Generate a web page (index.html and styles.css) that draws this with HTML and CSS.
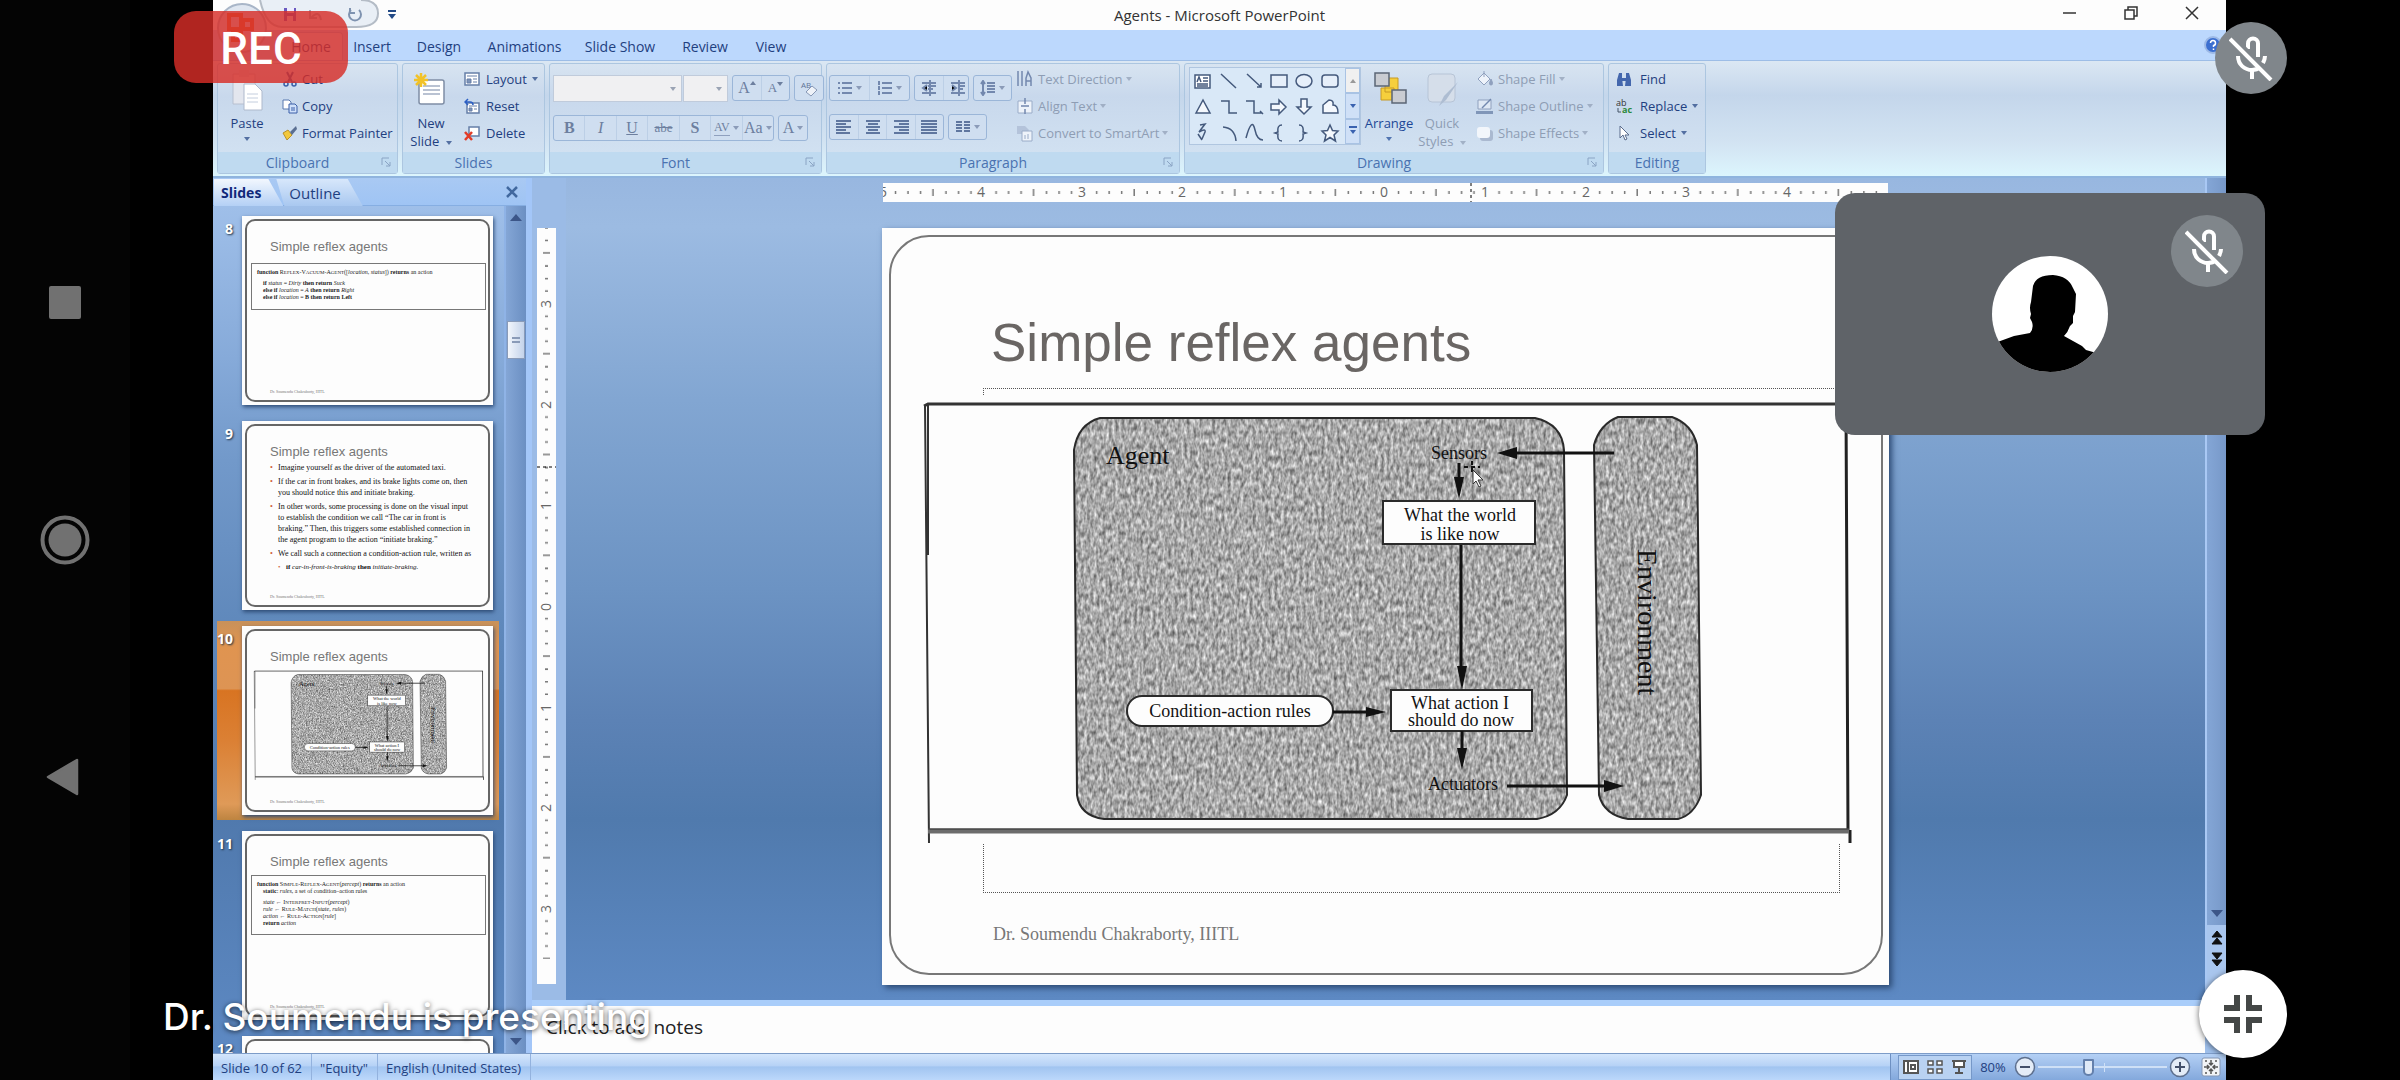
FILE: index.html
```html
<!DOCTYPE html>
<html lang="en">
<head>
<meta charset="utf-8">
<title>Dr. Soumendu is presenting</title>
<link rel="stylesheet" href="styles.css">
</head>
<body>
<svg class="defs" aria-hidden="true">
  <defs>
    <filter id="halftone" x="0" y="0" width="1" height="1" color-interpolation-filters="sRGB">
      <feTurbulence type="fractalNoise" baseFrequency=".32 .16" numOctaves="2" seed="4"/>
      <feColorMatrix values=".8 0 0 0 .26  .8 0 0 0 .26  .8 0 0 0 .26  0 0 0 0 1"/>
      <feComposite operator="in" in2="SourceGraphic"/>
    </filter>
    <symbol id="mic-off" viewBox="0 0 44 46">
      <g fill="none" stroke="#fff" stroke-width="4">
        <path d="M19 14V8.500a5 5 0 0 1 10 0V22"/>
        <path d="M9 21c0 9 7 14 14 14 3 0 6-1 8-3M36 21c0 3-1 5-2 7"/>
        <path d="M23 35v9"/>
      </g>
      <path d="M4 1l40 42" stroke="#80868b" stroke-width="4"/>
      <path d="M1 4l41 41" stroke="#fff" stroke-width="4"/>
    </symbol>
    <symbol id="launch" viewBox="0 0 10 10"><path d="M1 8V1h7M4 4l5 5M9 5v4H5" fill="none" stroke="#8aa4c4"/></symbol>
    <pattern id="hticks" width="100.6" height="20" patternUnits="userSpaceOnUse">
      <path d="M12.500 8v3M25 8v3M37.500 8v3M50 6v7M63 8v3M75.500 8v3M88 8v3" stroke="#777" stroke-width="1.500"/>
    </pattern>
    <pattern id="vticks" width="20" height="100.8" patternUnits="userSpaceOnUse">
      <path d="M8 12.500h3M8 25h3M8 37.500h3M6 50h7M8 63h3M8 75.500h3M8 88h3" stroke="#777" stroke-width="1.500"/>
    </pattern>
  </defs>
</svg>

<div class="screen">
  <nav class="sysnav" aria-label="System">
    <button aria-label="Recents"><svg width="34" height="34"><rect x="1" width="32" height="33" rx="2" fill="#717171"/></svg></button>
    <button aria-label="Home"><svg width="50" height="50"><circle cx="25" cy="25" r="22.500" fill="none" stroke="#717171" stroke-width="4"/><circle cx="25" cy="25" r="16.500" fill="#717171"/></svg></button>
    <button aria-label="Back"><svg width="38" height="40"><path d="M2 20L31 3v34z" fill="#717171" stroke="#717171" stroke-width="2.500" stroke-linejoin="round"/></svg></button>
  </nav>

  <main class="app">
    <header class="titlebar">
      <div class="quick">
        <svg width="170" height="60">
          <path d="M47 0q6 27 22 27h74q22 0 22-13.500T148 0" fill="#e9eff6" stroke="#b4bcc6" stroke-width="2"/>
          <circle cx="29" cy="28" r="24" fill="#dfe6f0" stroke="#a9b6c8" stroke-width="2"/>
          <path d="M16 15h12v14H16zM30 20h9v9h-9zM20 32h8v8h-8z" fill="none" stroke="#e2703a" stroke-width="4"/>
          <path d="M71 8h12v13H71z" fill="#6a5ac0"/><path d="M74 8h7v5h-7zM74 16h6v5h-6z" fill="#eef"/>
          <path d="M98 18q8-9 10 2M97 10v8h7" fill="none" stroke="#9ea9bd" stroke-width="2"/>
          <path d="M138 10a6 6 0 1 0 8 0M137 8v5h5" fill="none" stroke="#7f93b0" stroke-width="2"/>
        </svg>
        <svg class="more" width="10" height="12"><path d="M1 2h8" stroke="#234a86" stroke-width="2"/><path d="M1 5h8l-4 5z" fill="#234a86"/></svg>
      </div>
      <h1>Agents - Microsoft PowerPoint</h1>
      <div class="wincontrols">
        <button aria-label="Minimize"><svg width="14" height="14"><path d="M0 7h13" stroke="#333" stroke-width="1.500"/></svg></button>
        <button aria-label="Restore"><svg width="14" height="14" fill="none" stroke="#333" stroke-width="1.500"><path d="M1 4h9v9H1zM4 4V1h9v9h-3"/></svg></button>
        <button aria-label="Close"><svg width="14" height="14"><path d="M1 1l12 12M13 1L1 13" stroke="#333" stroke-width="1.500"/></svg></button>
      </div>
    </header>

    <div class="tabs">
      <button class="tab on">Home</button><button class="tab">Insert</button><button class="tab">Design</button><button class="tab">Animations</button><button class="tab">Slide Show</button><button class="tab">Review</button><button class="tab">View</button>
      <svg class="help" width="20" height="20"><circle cx="10" cy="10" r="8" fill="#3c6fd0" stroke="#9db9e6" stroke-width="2"/><path d="M7.500 8a2.500 2.500 0 1 1 3 2.500v1.500M10.500 13.500v1.500" stroke="#fff" stroke-width="1.500" fill="none"/></svg>
    </div>

    <div class="ribbon">
      <section class="group clipboard">
        <div class="body">
          <button class="big"><svg width="36" height="44"><path d="M4 6h22v30H4z" fill="#e3e6ee" stroke="#b7c0d0"/><path d="M10 2h10v7H10z" fill="#cfd5e0"/><path d="M15 16h11l7 7v19H15z" fill="#fff" stroke="#aeb9cc"/><path d="M18 26h11M18 30h11M18 34h11" stroke="#c4cede"/></svg><span>Paste</span><i class="car"></i></button>
          <div class="col">
            <button><svg width="16" height="16"><path d="M5 1l5 10M11 1L6 11" stroke="#3a5fa8" stroke-width="2"/><circle cx="4" cy="13" r="2" fill="none" stroke="#3a5fa8" stroke-width="1.500"/><circle cx="12" cy="13" r="2" fill="none" stroke="#3a5fa8" stroke-width="1.500"/></svg>Cut</button>
            <button><svg width="16" height="16"><path d="M1 2h6l2 2v7H1z" fill="#fff" stroke="#5878b0"/><path d="M7 6h6l2 2v7H7z" fill="#cfe0fa" stroke="#3a5fa8"/><path d="M9 10h4M9 12h4" stroke="#3a5fa8"/></svg>Copy</button>
            <button><svg width="16" height="16"><path d="M1 8l5-3 4 5-5 5z" fill="#f2c83c" stroke="#b8902a"/><path d="M8 7l6-6 1 3-5 6z" fill="#5a6f92"/></svg>Format Painter</button>
          </div>
        </div>
        <h2 class="more-opts">Clipboard<svg width="10" height="10"><use href="#launch"/></svg></h2>
      </section>

      <section class="group slides">
        <div class="body">
          <button class="big"><svg width="36" height="44"><rect x="6" y="12" width="25" height="24" rx="2" fill="#fff" stroke="#7f8da5" stroke-width="1.500"/><path d="M10 18h17M10 22h17M10 26h17" stroke="#b9c2d2" stroke-width="2"/><path d="M8 5v14M1 12h14M3 7l10 10M13 7L3 17" stroke="#f2c227" stroke-width="2.500"/></svg><span>New<br>Slide <i class="car"></i></span></button>
          <div class="col">
            <button><svg width="16" height="16"><path d="M1 2h14v12H1z" fill="#fff" stroke="#667fa8" stroke-width="1.500"/><path d="M3 5h10M3 8h4v4H3zM9 8h4M9 11h4" fill="#7e94b8" stroke="#667fa8"/></svg>Layout <i class="car"></i></button>
            <button><svg width="16" height="16"><path d="M3 5h12v10H3z" fill="#fff" stroke="#667fa8" stroke-width="1.500"/><path d="M5 8h8M5 10h3v3H5zM10 11h3" fill="#7e94b8" stroke="#667fa8"/><path d="M1 4h5q3 0 3 3M4 1L1 4l3 3" fill="none" stroke="#2c5fc4" stroke-width="1.500"/></svg>Reset</button>
            <button><svg width="16" height="16"><path d="M5 2h10v9H5z" fill="#fff" stroke="#667fa8" stroke-width="1.500"/><path d="M1 7l7 8M8 7l-7 8" stroke="#e23c28" stroke-width="2.500"/></svg>Delete</button>
          </div>
        </div>
        <h2>Slides</h2>
      </section>

      <section class="group font">
        <div class="body rows">
          <div class="row">
            <div class="combo"><select class="face" aria-label="Font" disabled></select><select class="size" aria-label="Font size" disabled></select></div>
            <div class="seg"><button class="serif" aria-label="Grow font">A<svg width="6" height="16"><path d="M0 5l3-4 3 4z" fill="#6d7f9f"/></svg></button><button class="serif small" aria-label="Shrink font">A<svg width="6" height="16"><path d="M0 2l3 4 3-4z" fill="#6d7f9f"/></svg></button></div>
            <div class="seg"><button aria-label="Clear formatting"><svg width="18" height="18"><text x="1" y="9" class="tiny">AB</text><path d="M6 13l6-6 5 4-6 6z" fill="#eef2f8" stroke="#8798b5"/></svg></button></div>
          </div>
          <div class="row">
            <div class="seg wide"><button class="serif"><b>B</b></button><button class="serif"><em>I</em></button><button class="serif"><u>U</u></button><button class="serif"><s>abe</s></button><button class="serif"><b>S</b></button><button class="serif av"><span>AV</span><i class="car"></i></button><button class="serif">Aa<i class="car"></i></button></div>
            <div class="seg"><button class="serif color">A<i class="car"></i></button></div>
          </div>
        </div>
        <h2 class="more-opts">Font<svg width="10" height="10"><use href="#launch"/></svg></h2>
      </section>

      <section class="group paragraph">
        <div class="body">
          <div class="rows">
            <div class="row">
              <div class="seg p2"><button aria-label="Bullets"><svg width="16" height="16" stroke="#7388ae" stroke-width="2"><path d="M1 3h2M1 8h2M1 13h2M5 3h10M5 8h10M5 13h10"/></svg><i class="car"></i></button><button aria-label="Numbering"><svg width="16" height="16" stroke="#7388ae" stroke-width="2"><path d="M2 1v4M2 6v4M2 11v4M5 3h10M5 8h10M5 13h10"/></svg><i class="car"></i></button></div>
              <div class="seg i2"><button aria-label="Decrease indent"><svg width="16" height="16" stroke="#7388ae" stroke-width="2"><path d="M1 3h14M7 6h8M7 9h5M1 13h14M6 5L2 8l4 3M9 0v16"/></svg></button><button aria-label="Increase indent"><svg width="16" height="16" stroke="#7388ae" stroke-width="2"><path d="M1 3h14M8 6h7M8 9h5M1 13h14M2 5l4 3-4 3M9 0v16"/></svg></button></div>
              <div class="seg s1"><button aria-label="Line spacing"><svg width="16" height="16" stroke="#7388ae" stroke-width="2" fill="none"><path d="M3 1v14M1 4l2-3 2 3M1 12l2 3 2-3M7 3h8M7 6h8M7 9h8M7 12h8"/></svg><i class="car"></i></button></div>
            </div>
            <div class="row">
              <div class="seg a4"><button aria-label="Align left"><svg width="16" height="16" stroke="#5f769f" stroke-width="2"><path d="M0 2h15M0 5h10M0 8h15M0 11h10M0 14h14"/></svg></button><button aria-label="Center"><svg width="16" height="16" stroke="#5f769f" stroke-width="2"><path d="M1 2h14M3 5h10M1 8h14M3 11h10M1 14h14"/></svg></button><button aria-label="Align right"><svg width="16" height="16" stroke="#5f769f" stroke-width="2"><path d="M1 2h15M6 5h10M1 8h15M6 11h10M1 14h15"/></svg></button><button aria-label="Justify"><svg width="16" height="16" stroke="#5f769f" stroke-width="2"><path d="M0 2h16M0 5h16M0 8h16M0 11h16M0 14h16"/></svg></button></div>
              <div class="seg s1"><button aria-label="Columns"><svg width="16" height="16" stroke="#5f769f" stroke-width="2"><path d="M1 3h6M1 6h6M1 9h6M1 12h6M9 3h6M9 6h6M9 9h6M9 12h6"/></svg><i class="car"></i></button></div>
            </div>
          </div>
          <div class="col off">
            <button><svg width="18" height="18" stroke="#7388ae" stroke-width="1.500" fill="none"><path d="M2 1v15M6 1v15M10 16V8l2-6 3 6v8M10 11h5"/></svg>Text Direction <i class="car"></i></button>
            <button><svg width="18" height="18"><path d="M2 4h14v12H2z" fill="#eef3fa" stroke="#9aacc8"/><path d="M9 1v6M9 17v-5M5 9h8" stroke="#7388ae" stroke-width="1.500"/></svg>Align Text <i class="car"></i></button>
            <button><svg width="18" height="18"><path d="M1 2h8l4 4-3 4H1z" fill="#b4c3da"/><path d="M6 7h10v10H6z" fill="#eef3fa" stroke="#9aacc8"/><path d="M9 11v4M12 10v5" stroke="#9aacc8"/></svg>Convert to SmartArt <i class="car"></i></button>
          </div>
        </div>
        <h2 class="more-opts">Paragraph<svg width="10" height="10"><use href="#launch"/></svg></h2>
      </section>

      <section class="group drawing">
        <div class="body">
          <div class="gallery">
            <svg width="155" height="78" fill="none" stroke="#44597c" stroke-width="1.500">
              <g><path d="M5 7h15v13H5z" fill="#fff"/><path d="M7 16h11M7 18h11M13 10h5M13 13h5"/><path d="M7 14l2-5 2 5" /></g>
              <path d="M31 6l15 14M57 6l14 13M71 15v4h-4"/>
              <path d="M81 7h16v12H81z" fill="#e6effa"/><ellipse cx="114" cy="13" rx="8" ry="6.500" fill="#e6effa"/><rect x="132" y="7" width="16" height="12" rx="3" fill="#e6effa"/>
              <path d="M6 45l7-13 7 13z" fill="#f4f8fd"/><path d="M31 33h8v12h8M56 33h8v12h8M70 43l3 3"/>
              <path d="M81 36h8v-4l7 7-7 7v-4h-8zM111 31h6v8h4l-7 7-7-7h4z" fill="#f4f8fd"/><path d="M133 45v-8l6-5q5 0 4 5 5 0 5 8z" fill="#f4f8fd"/>
              <path d="M10 57l5-1-6 8q7-4 6 0l-3 7M8 66l4 6M33 59q12 1 13 14M56 70q6-22 9-8 2 10 8 10M92 57q-5 0-4 7l-3 1 3 1q-1 7 4 7M109 57q5 0 4 7l3 1-3 1q1 7-4 7"/>
              <path d="M140 57l2.500 5.500 5.500.5-4 4 1.500 6-5.500-3.500-5.500 3.500 1.500-6-4-4 5.500-.5z" fill="#f4f8fd"/>
            </svg>
            <div class="gscroll"><button aria-label="Previous shapes" class="dis"><svg width="8" height="8"><path d="M1 6l3-4 3 4z" fill="#999"/></svg></button><button aria-label="Next shapes"><svg width="8" height="8"><path d="M1 2l3 4 3-4z" fill="#3a62b0"/></svg></button><button aria-label="More shapes"><svg width="8" height="10"><path d="M0 0h8v2H0zM1 4l3 4 3-4z" fill="#3a62b0"/></svg></button></div>
          </div>
          <button class="big strong"><svg width="36" height="44"><path d="M14 10h13v14H14zM10 20h13v12H10z" fill="#f6cf3c" stroke="#c79a24"/><path d="M4 5h14v13H4zM21 22h14v13H21z" fill="#c9ccd2" stroke="#5b6676" stroke-width="1.500"/></svg><span>Arrange</span><i class="car"></i></button>
          <button class="big off"><svg width="36" height="44"><rect x="4" y="6" width="27" height="28" rx="4" fill="#d5deea" stroke="#b7c4d6"/><path d="M34 14L22 32l-7 6 5-10z" fill="#aebdd2"/></svg><span>Quick<br>Styles <i class="car"></i></span></button>
          <div class="col off">
            <button><svg width="18" height="18"><path d="M2 9l6-6 6 6-6 6z" fill="#eef3fa" stroke="#8fa0be"/><path d="M8 1v6M15 9q3 6 0 6t0-6" stroke="#8fa0be" fill="#8fa0be"/></svg>Shape Fill <i class="car"></i></button>
            <button><svg width="18" height="18"><path d="M2 3h13v9H2z" fill="#dfe8f4" stroke="#8fa0be"/><path d="M6 11l9-9" stroke="#7388ae" stroke-width="1.500"/><path d="M0 15.500h17" stroke="#8096b8" stroke-width="3"/></svg>Shape Outline <i class="car"></i></button>
            <button><svg width="18" height="18"><rect x="4" y="6" width="13" height="11" rx="3" fill="#aab9d0"/><rect x="1" y="3" width="13" height="11" rx="3" fill="#f2f6fb"/></svg>Shape Effects <i class="car"></i></button>
          </div>
        </div>
        <h2 class="more-opts">Drawing<svg width="10" height="10"><use href="#launch"/></svg></h2>
      </section>

      <section class="group editing">
        <div class="body">
          <div class="col">
            <button><svg width="18" height="16"><path d="M3 2h3v5l1 8H1V9zM10 2h3l2 7v6H9l1-8z" fill="#4467ad"/><path d="M6 7h4v3H6z" fill="#4467ad"/></svg>Find</button>
            <button><svg width="18" height="20"><text x="0" y="10" class="tiny dark">ab</text><text x="6" y="17" class="tiny green">ac</text><path d="M2 12v4h3" fill="none" stroke="#456"/></svg>Replace <i class="car"></i></button>
            <button><svg width="18" height="16"><path d="M4 1v12l3-3 2 5 2-1-2-4h4z" fill="#fff" stroke="#5a6c8c"/></svg>Select <i class="car"></i></button>
          </div>
        </div>
        <h2>Editing</h2>
      </section>
    </div>

    <div class="work">
      <aside class="pane">
        <div class="panetabs">
          <button class="ptab on">Slides</button><button class="ptab">Outline</button><button class="close" aria-label="Close pane"><svg width="12" height="12"><path d="M1 1l10 10M11 1L1 11" stroke="#41689f" stroke-width="2.500"/></svg></button>
        </div>
        <div class="panebody">
          <ol class="thumbs">
            <li><span class="num">8</span><div class="thumb">
              <h3>Simple reflex agents</h3>
              <div class="code eight"><p><b>function</b> R<small>EFLEX</small>-V<small>ACUUM</small>-A<small>GENT</small>([<em>location, status</em>]) <b>returns</b> an action</p>
              <p class="in gap"><b>if</b> <em>status</em> = <em>Dirty</em> <b>then return</b> <em>Suck</em></p><p class="in"><b>else if</b> <em>location</em> = <em>A</em> <b>then return</b> <em>Right</em></p><p class="in"><b>else if</b> <em>location</em> = <b>B then return Left</b></p></div>
              <footer>Dr. Soumendu Chakraborty, IIITL</footer></div></li>
            <li><span class="num">9</span><div class="thumb">
              <h3>Simple reflex agents</h3>
              <ul><li>Imagine yourself as the driver of the automated taxi.</li><li>If the car in front brakes, and its brake lights come on, then<br>you should notice this and initiate braking.</li><li>In other words, some processing is done on the visual input<br>to establish the condition we call “The car in front is<br>braking.” Then, this triggers some established connection in<br>the agent program to the action “initiate braking.”</li><li>We call such a connection a condition-action rule, written as</li><li class="sub"><b>if</b> <em>car-in-front-is-braking</em> <b>then</b> <em>initiate-braking.</em></li></ul>
              <footer>Dr. Soumendu Chakraborty, IIITL</footer></div></li>
            <li class="sel"><span class="num">10</span><div class="thumb">
              <h3>Simple reflex agents</h3>
              <svg class="mini" viewBox="920 396 936 447" width="232" height="111"><use href="#diagram"/></svg>
              <footer>Dr. Soumendu Chakraborty, IIITL</footer></div></li>
            <li><span class="num">11</span><div class="thumb">
              <h3>Simple reflex agents</h3>
              <div class="code eleven"><p><b>function</b> S<small>IMPLE</small>-R<small>EFLEX</small>-A<small>GENT</small>(<em>percept</em>) <b>returns</b> an action</p><p class="in"><b>static</b>: <em>rules</em>, a set of condition–action rules</p>
              <p class="in gap"><em>state</em> ← I<small>NTERPRET</small>-I<small>NPUT</small>(<em>percept</em>)</p><p class="in"><em>rule</em> ← R<small>ULE</small>-M<small>ATCH</small>(<em>state, rules</em>)</p><p class="in"><em>action</em> ← R<small>ULE</small>-A<small>CTION</small>[<em>rule</em>]</p><p class="in"><b>return</b> <em>action</em></p></div>
              <footer>Dr. Soumendu Chakraborty, IIITL</footer></div></li>
            <li><span class="num">12</span><div class="thumb"></div></li>
          </ol>
          <div class="vscroll"><i class="up"></i><i class="grip"></i><i class="down"></i></div>
        </div>
      </aside>

      <section class="editor">
        <div class="canvas">
          <div class="vruler">
            <svg width="19" height="756">
              <rect width="19" height="756" fill="#fdfdfd"/><rect y="-24" width="19" height="780" fill="url(#vticks)" transform="translate(0 -25)"/>
              <g class="rnum"><text transform="translate(14 76) rotate(-90)">3</text><text transform="translate(14 177) rotate(-90)">2</text><text transform="translate(14 278) rotate(-90)">1</text><text transform="translate(14 379) rotate(-90)">0</text><text transform="translate(14 480) rotate(-90)">1</text><text transform="translate(14 580) rotate(-90)">2</text><text transform="translate(14 681) rotate(-90)">3</text></g>
              <path d="M0 239h19" stroke="#000" stroke-width="1" stroke-dasharray="3 3"/>
            </svg>
          </div>
          <div class="stage">
            <svg class="hruler" width="1005" height="19">
              <rect width="1005" height="19" fill="#fdfdfd"/><rect width="1006" height="19" fill="url(#hticks)"/>
              <g class="rnum"><text x="0" y="14">5</text><text x="98" y="14">4</text><text x="199" y="14">3</text><text x="299" y="14">2</text><text x="400" y="14">1</text><text x="501" y="14">0</text><text x="602" y="14">1</text><text x="703" y="14">2</text><text x="803" y="14">3</text><text x="904" y="14">4</text></g>
              <path d="M588 0v19" stroke="#000" stroke-width="1" stroke-dasharray="3 3"/>
            </svg>
            <article class="slide">
              <div class="holder"></div>
              <h2>Simple reflex agents</h2>
              <svg class="figure" viewBox="920 396 936 447" width="936" height="447" role="img" aria-label="Simple reflex agent diagram">
                <g id="diagram">
                  <rect x="920" y="396" width="936" height="447" fill="#fdfdfd"/>
                  <path d="M924 406L928 404H1848" fill="none" stroke="#333" stroke-width="3"/>
                  <path d="M925 405l4 438M928 405v150" fill="none" stroke="#333" stroke-width="2"/>
                  <path d="M1846 404l2 428M1850 830v13" fill="none" stroke="#222" stroke-width="3"/>
                  <path d="M928 831h921" stroke="#6c6c6c" stroke-width="5"/><path d="M928 829h921" stroke="#333" stroke-width="1"/>
                  <path d="M1100 418H1535Q1562 424 1564 450L1567 795Q1560 815 1537 819H1104Q1080 816 1077 795L1074 450Q1078 424 1100 418z" fill="#aaa" filter="url(#halftone)"/>
                  <path d="M1618 417H1672Q1692 424 1697 445L1701 795Q1694 815 1678 819H1628Q1604 815 1599 795L1594 445Q1600 424 1618 417z" fill="#aaa" filter="url(#halftone)"/>
                  <g fill="none" stroke="#2a2a2a" stroke-width="2">
                    <path d="M1100 418H1535Q1562 424 1564 450L1567 795Q1560 815 1537 819H1104Q1080 816 1077 795L1074 450Q1078 424 1100 418z"/>
                    <path d="M1618 417H1672Q1692 424 1697 445L1701 795Q1694 815 1678 819H1628Q1604 815 1599 795L1594 445Q1600 424 1618 417z"/>
                    <rect x="1383" y="501" width="152" height="43" fill="#fdfdfd"/><rect x="1391" y="690" width="141" height="41" fill="#fdfdfd"/>
                    <rect x="1127" y="696" width="206" height="30" rx="15" fill="#fdfdfd"/>
                  </g>
                  <path d="M1614 453H1510M1459 463v22M1461 545v128M1462 731v24M1333 712h36M1507 786h98" stroke="#111" stroke-width="3"/>
                  <path d="M1497 453l20-6v12zM1459 499l-5-22h10zM1462 690l-5-24h10zM1462 770l-5-22h10zM1386 712l-20-5v10zM1624 786l-20-6v12z" fill="#111"/>
                  <g class="dtext">
                    <text x="1106" y="464" class="dbig">Agent</text>
                    <text x="1459" y="459" text-anchor="middle">Sensors</text>
                    <text x="1460" y="521" text-anchor="middle">What the world</text><text x="1460" y="540" text-anchor="middle">is like now</text>
                    <text x="1460" y="709" text-anchor="middle">What action I</text><text x="1461" y="726" text-anchor="middle">should do now</text>
                    <text x="1230" y="717" text-anchor="middle">Condition-action rules</text>
                    <text x="1463" y="790" text-anchor="middle">Actuators</text>
                    <text transform="translate(1638 549) rotate(90)" class="dside">Environment</text>
                  </g>
                </g>
                <path d="M1472 461v13M1464 467h16" stroke="#111" stroke-width="2" stroke-dasharray="4 3"/>
                <path d="M1473 470v14l3-3 3 6 2-1-3-6h5z" fill="#fff" stroke="#333"/>
              </svg>
              <footer>Dr. Soumendu Chakraborty, IIITL</footer>
            </article>
          </div>
          <div class="vscroll right"><div class="track"><i class="down"></i></div>
            <svg width="12" height="75"><path d="M6 6l5 6H1zM6 13l5 6H1zM6 41l5-6H1zM6 34l5-6H1z" fill="#111" stroke="#111"/></svg></div>
        </div>
        <div class="notes"><label class="sr" for="notes">Notes</label><input id="notes" type="text" value="Click to add notes"></div>
      </section>
    </div>

    <footer class="status">
      <span>Slide 10 of 62</span><span>"Equity"</span><span>English (United States)</span>
      <div class="right">
        <div class="views">
          <button aria-label="Normal"><svg width="16" height="16" fill="#fff" stroke="#555" stroke-width="2"><path d="M1 2h14v12H1zM5 2v12M8 6h4v4H8z"/></svg></button>
          <button aria-label="Slide sorter"><svg width="16" height="16" fill="#fff" stroke="#555" stroke-width="1.500"><path d="M1 2h5v4H1zM10 2h5v4h-5zM1 10h5v4H1zM10 10h5v4h-5z"/></svg></button>
          <button aria-label="Slide show"><svg width="16" height="16" fill="#fff" stroke="#555" stroke-width="2"><path d="M1 2h14M3 3v5h10V3M8 8v5M4 14h8"/></svg></button>
        </div>
        <button class="pct">80%</button>
        <button aria-label="Zoom out"><svg width="22" height="22"><circle cx="11" cy="11" r="9.500" fill="#e4ecf7" stroke="#5d6f8d" stroke-width="1.500"/><path d="M6 11h10" stroke="#44506a" stroke-width="2"/></svg></button>
        <div class="slider"><input type="range" min="10" max="400" value="160" aria-label="Zoom"></div>
        <button aria-label="Zoom in"><svg width="22" height="22"><circle cx="11" cy="11" r="9.500" fill="#e4ecf7" stroke="#5d6f8d" stroke-width="1.500"/><path d="M6 11h10M11 6v10" stroke="#44506a" stroke-width="2"/></svg></button>
        <button class="fit" aria-label="Fit to window"><svg width="20" height="20"><rect x="1" y="1" width="18" height="18" rx="2" fill="#f2f4f7" stroke="#8497b5"/><path d="M10 3v5M8 6l2 2 2-2M10 17v-5M8 14l2-2 2 2M3 10h5M6 8l2 2-2 2M17 10h-5M14 8l-2 2 2 2M4 4h2M14 4h2M4 16h2M14 16h2" fill="none" stroke="#555" stroke-width="1.500"/></svg></button>
      </div>
    </footer>
  </main>

  <div class="rec">REC</div>
  <button class="mute top" aria-label="Microphone off"><svg width="44" height="46"><use href="#mic-off"/></svg></button>
  <div class="tile">
    <svg class="avatar" width="116" height="116" viewBox="0 0 116 116"><defs><clipPath id="disc"><circle cx="58" cy="58" r="58"/></clipPath></defs><g clip-path="url(#disc)"><rect width="116" height="116" fill="#fff"/><path d="M0 88L22 80 38 77Q42 72 40 66L38 62 39 58Q37 52 39 46L41 30Q44 19 61 19 76 20 81 32L84 38 83 56 81 60 81 67 78 70Q76 76 72 80L90 90 94 94 101 96 116 100V116H0z"/></g></svg>
    <div class="mute"><svg width="44" height="46"><use href="#mic-off"/></svg></div>
  </div>
  <p class="presenting">Dr. Soumendu is presenting</p>
  <button class="fab" aria-label="Exit full screen"><svg width="40" height="40"><path d="M14 1v13H1M26 1v13h13M14 39V26H1M26 39V26h13" fill="none" stroke="#444746" stroke-width="6"/></svg></button>
</div>
</body>
</html>
```
FILE: styles.css
```css
* { box-sizing: border-box; margin: 0; padding: 0; }
body { background: #000; font-family: "Open Sans", "Noto Sans", sans-serif; font-size: 13px; color: #1f4080; overflow: hidden; }
button, select, input { font: inherit; color: inherit; background: none; border: 0; }
svg { display: block; flex: none; }
.defs { position: absolute; width: 0; height: 0; }
.sr { position: absolute; clip-path: inset(50%); width: 1px; height: 1px; overflow: hidden; }

.screen { position: relative; display: flex; height: 100vh; padding-right: 174px; overflow: hidden; }
.sysnav { width: 130px; margin-right: 83px; background: #040404; display: flex; flex-direction: column; align-items: center; justify-content: center; gap: 187px; flex: none; }
.sysnav button { display: flex; align-items: center; justify-content: center; height: 50px; }

.app { flex: 1; min-width: 0; display: flex; flex-direction: column; background: #fdfdfd; }
.titlebar { position: relative; height: 30px; display: flex; align-items: center; justify-content: center; flex: none; }
.titlebar h1 { font-size: 15px; font-weight: 400; color: #333; line-height: 30px; }
.quick { position: absolute; left: 0; top: 0; z-index: 1; display: flex; gap: 4px; }
.more { margin-top: 9px; }
.wincontrols { position: absolute; right: 27px; top: 6px; display: flex; gap: 47px; }

.tabs { height: 31px; background: #bcd8fd; display: flex; align-items: flex-end; padding-left: 66px; border-bottom: 1px solid #9dbde6; flex: none; }
.tab { height: 28px; width: 64px; font-size: 14px; flex: none; }
.tab.on { background: #dbe8f6; border: 1px solid #9dbde6; border-bottom: 0; border-radius: 4px 4px 0 0; }
.tab:nth-child(2) { width: 58px; }
.tab:nth-child(3) { width: 76px; }
.tab:nth-child(4) { width: 95px; }
.tab:nth-child(5) { width: 96px; }
.tab:nth-child(6) { width: 74px; }
.tab:nth-child(7) { width: 58px; }
.help { margin: 0 3px 5px auto; }

.ribbon { display: flex; gap: 4px; height: 117px; padding: 2px 4px; background: linear-gradient(#dbe7f3, #c4d6eb 30%, #d2e3f2 70%, #dcf5fd); border-bottom: 2px solid #8fb4de; flex: none; }
.group { display: flex; flex-direction: column; border: 1px solid #acc6e0; border-radius: 3px; height: 111px; flex: none; background: linear-gradient(#d8e4f1, #c8d8ec 30%, #d4e4f3); }
.group h2 { position: relative; height: 21px; background: #bfdaf0; font-size: 14px; line-height: 22px; font-weight: 400; color: #4a72b0; text-align: center; }
.group h2.more-opts { padding-right: 20px; }
.group h2 svg { position: absolute; right: 6px; top: 5px; }
.body { flex: 1; display: flex; }
.clipboard { width: 181px; }
.slides { width: 143px; }
.font { width: 273px; }
.paragraph { width: 354px; }
.drawing { width: 420px; }
.editing { width: 98px; }
.clipboard .body { padding-left: 4px; }
.slides .body { padding-left: 3px; }
.drawing .body { padding-left: 4px; }
.editing .body { padding-left: 7px; }
.big { width: 50px; display: flex; flex-direction: column; align-items: center; justify-content: flex-start; line-height: 18px; flex: none; }
.big svg { margin-top: 4px; }
.big span { margin-top: 2px; }
.big > .car { margin: 5px 0 0; }
.car { display: inline-block; border: 3px solid transparent; border-top: 4px solid currentColor; border-bottom: 0; vertical-align: middle; margin-left: 3px; opacity: .7; }
.col { display: flex; flex-direction: column; padding: 1px 0 0 10px; }
.col button { display: flex; align-items: center; gap: 6px; height: 27px; white-space: nowrap; }
.clipboard .col button { gap: 4px; }
.off { color: #8e9db4; }
.strong { color: #1c4796; }
.col .car { margin-left: -1px; }
.slides .col { padding-left: 8px; }
.drawing .col { padding-left: 9px; }
.drawing .col button { gap: 4px; }
.editing .col { padding-left: 0; }

.rows { display: flex; flex-direction: column; gap: 13px; padding: 11px 0 0 3px; }
.row { display: flex; gap: 4px; }
.seg { display: flex; border: 1px solid #9bb6d8; border-radius: 3px; height: 26px; background: #cfdef0; color: #6d7f9f; }
.seg button { flex: 1; display: flex; align-items: center; justify-content: center; border-left: 1px solid #bccfe6; min-width: 28px; white-space: nowrap; }
.seg button:first-child { border-left: 0; }
.serif { font-family: "Liberation Serif", serif; font-size: 16px; }
.serif s { font-size: 13px; }
.small { font-size: 13px; }
.wide { width: 221px; }
.color { min-width: 40px; }
.av span { font-size: 12px; border-bottom: 1px solid #8fa0be; }
.tiny { font: 8px "Open Sans", sans-serif; fill: #5f7397; }
.tiny.dark { fill: #333; font-size: 9px; }
.tiny.green { fill: #2c8a3c; font-size: 9px; font-weight: 700; }
.combo { display: flex; gap: 1px; }
.combo select { appearance: none; height: 27px; border: 1px solid #c0cbdb; opacity: 1; background: #f0f0f2 url("data:image/svg+xml,%3Csvg xmlns='http://www.w3.org/2000/svg' width='6' height='4'%3E%3Cpath d='M0 0h6L3 4z' fill='%239aa3b4'/%3E%3C/svg%3E") right 5px center no-repeat; }
.face { width: 129px; }
.size { width: 45px; }
.p2 { width: 81px; }
.i2 { width: 55px; }
.s1 { width: 39px; }
.a4 { width: 115px; }
.paragraph .col { padding-left: 4px; }
.paragraph .col button { gap: 4px; }
.paragraph .rows { padding-left: 2px; }

.gallery { display: flex; width: 172px; height: 78px; margin-top: 3px; background: #d9e8f7; border: 1px solid #b0c6e0; }
.gallery > svg { height: 76px; }
.gscroll { flex: 1; display: flex; flex-direction: column; }
.gscroll button { flex: 1; display: flex; align-items: center; justify-content: center; border: 1px solid #a9c3e4; background: #cfe0f7; }
.gscroll .dis { background: #f0f0f0; }
.drawing .big { width: 56px; }
.drawing .off.big { width: 50px; }

.work { flex: 1; min-height: 0; display: flex; }
.pane { width: 313px; flex: none; display: flex; flex-direction: column; }
.panetabs { height: 28px; padding: 1px 0 0 1px; display: flex; background: linear-gradient(#a9c9f3, #9fc4f4); border-bottom: 1px solid #86aee2; flex: none; }
.ptab { height: 27px; font-size: 15px; padding: 0 22px 0 7px; background: linear-gradient(#d7e7fb, #a9c8f0); clip-path: polygon(0 0, calc(100% - 15px) 0, 100% 100%, 0 100%); }
.ptab + .ptab { margin-left: -7px; padding-left: 13px; clip-path: polygon(0 0, calc(100% - 15px) 0, 100% 100%, 8px 100%); }
.ptab.on { background: linear-gradient(#f2f7fe, #b4d0f5); font-size: 14px; font-weight: 700; color: #10287a; }
.close { margin-left: auto; margin-right: 8px; }
.panebody { flex: 1; min-height: 0; display: flex; }
.thumbs { flex: 1; list-style: none; overflow: hidden; padding: 5px 0 0 4px; display: flex; flex-direction: column; gap: 6px; background: linear-gradient(#9fbfe9, #86aad9 18%, #7299ca 30%, #5f88bb 50%, #5079ad 72%, #5d89c3); border-right: 2px solid #8fb3e6; }
.thumbs > li { display: flex; height: 199px; width: 282px; padding: 5px 0; flex: none; }
.thumbs > .sel { background: linear-gradient(#c8915a, #e09450 12%, #dd9454 34%, #d87422 35%, #db8034 60%, #df9a58 92%, #bd8440); }
.num { width: 25px; padding-right: 9px; display: flex; justify-content: flex-end; font: 700 14px/26px "Noto Sans", sans-serif; color: #fff; text-shadow: 1px 1px 2px #234; }
.thumb { position: relative; width: 251px; height: 189px; background: #fdfdfd; box-shadow: 1px 2px 4px #2c4a74; display: flex; flex-direction: column; font-family: "Liberation Serif", serif; color: #222; flex: none; }
.thumb::before { content: ""; position: absolute; inset: 3px; border: 2px solid #666; border-radius: 10px; }
.thumb h3 { font: 400 13px/16px "Liberation Sans", sans-serif; color: #777; padding: 23px 0 0 28px; }
.thumb footer { margin: auto 0 9px 28px; font-size: 4px; line-height: 8px; color: #777; }
.code { margin: 8px 7px 0 9px; border: 1px solid #777; font-size: 6px; line-height: 7px; padding: 5px; white-space: nowrap; }
.code small { font-size: 5px; }
.in { padding-left: 6px; }
.gap { padding-top: 4px; }
.eight { height: 47px; }
.eleven { height: 60px; margin-top: 5px; }
.thumb ul { list-style: none; margin: 2px 0 0 28px; font-size: 8px; line-height: 11px; white-space: nowrap; color: #111; }
.thumb ul li { padding-left: 8px; margin-bottom: 3px; text-indent: -8px; }
.thumb ul li::before { content: "•"; color: #d0603a; display: inline-block; width: 8px; text-indent: 0; }
.thumb ul .sub { margin-left: 8px; font-size: 7px; }
.mini { margin: 4px 0 0 11px; }
.vscroll { width: 20px; flex: none; background: linear-gradient(90deg, #84a6d6, #6b8fc2); display: flex; flex-direction: column; align-items: center; padding: 8px 0; }
.up, .down { border: 6px solid transparent; flex: none; }
.up { border-bottom: 7px solid #3c5688; border-top: 0; }
.down { border-top: 7px solid #3c5688; border-bottom: 0; margin-top: auto; }
.grip { width: 18px; height: 38px; margin-top: 100px; border: 1px solid #8a9bb8; background: linear-gradient(#8a9bb8 2px, transparent 2px 4px, #8a9bb8 4px) center / 8px 6px no-repeat, linear-gradient(90deg, #f2f6fc, #c4d3ea); }

.editor { flex: 1; min-width: 0; display: flex; flex-direction: column; border-left: 6px solid #a3c6f8; }
.canvas { flex: 1; min-height: 0; display: flex; background: linear-gradient(#98b7e0, #9cbbe2 6%, #82a6d2 27%, #6c93c3 50%, #5c82b5 66%, #507aad 78%, #5d89c3); }
.vruler { width: 34px; padding: 50px 0 0 5px; background: #9bbbe6; flex: none; overflow: hidden; }
.stage { flex: 1; min-width: 0; display: flex; flex-direction: column; align-items: center; padding-top: 5px; }
.rnum { font: 14px "Open Sans", sans-serif; fill: #666; }
.rnum text { text-anchor: middle; paint-order: stroke; stroke: #fdfdfd; stroke-width: 4px; }
.slide { position: relative; width: 1007px; height: 757px; margin-top: 26px; background: #fdfdfd; box-shadow: 3px 3px 6px #2c4a74; display: flex; flex-direction: column; padding-top: 85px; flex: none; }
.slide::before { content: ""; position: absolute; inset: 7px 6px 10px 7px; border: 2px solid #777; border-radius: 40px; }
.slide h2 { font: 400 53px/60px "Liberation Sans", sans-serif; color: #6a6664; padding-left: 109px; }
.holder { position: absolute; left: 101px; top: 160px; width: 857px; height: 505px; border: 1px dotted #555; }
.figure { position: relative; margin: 23px 0 0 38px; }
.dtext { font: 18px "Liberation Serif", serif; fill: #111; }
.dbig { font-size: 26px; }
.dside { font-size: 28px; }
.slide footer { font: 18px/20px "Liberation Serif", serif; color: #777; padding-left: 111px; margin-top: 81px; }
.vscroll.right { width: 21px; padding: 0; background: #a9c6ee; border-left: 2px solid #a9c8f4; }
.track { flex: 1; width: 100%; background: linear-gradient(90deg, #84a6d6, #7798c8); display: flex; flex-direction: column; align-items: center; padding: 8px 0; }

.notes { height: 53px; border-top: 6px solid #a9cdfa; border-right: 21px solid #9fc0ec; background: #fdfdfd; flex: none; display: flex; }
.notes input { flex: 1; padding-left: 14px; padding-bottom: 6px; font-size: 19px; color: #222; outline: 0; }
.status { height: 27px; display: flex; align-items: center; font-size: 13px; background: linear-gradient(#d4e6fc, #b6d2f6 45%, #a1c4f0 50%, #bcd8fb); border-top: 1px solid #7d9cc8; flex: none; }
.status > span { padding: 2px 9px 0 8px; line-height: 24px; border-right: 1px solid #93b2de; white-space: nowrap; }
.right { margin-left: auto; display: flex; align-items: center; }
.status .right { height: 26px; padding: 0 5px 0 7px; border-left: 1px solid #6e90c2; background: linear-gradient(#b4d0f5, #83a8dc); }
.views { display: flex; border: 1px solid #7698c8; background: #b9d2f2; height: 25px; }
.views button { width: 24px; display: flex; align-items: center; justify-content: center; }
.pct { width: 42px; }
.slider { width: 133px; display: flex; padding: 0 2px; }
.slider input { width: 100%; height: 20px; appearance: none; background: linear-gradient(#cfe0f6, #cfe0f6) 66px center / 1px 9px no-repeat, linear-gradient(#cfe0f6, #cfe0f6) center / 100% 2px no-repeat; }
.slider input::-webkit-slider-thumb { appearance: none; width: 11px; height: 17px; background: #dfe9f7; border: 2px solid #6480ac; border-radius: 1px 1px 5px 5px; }
.fit { margin-left: 10px; }

.rec { position: absolute; left: 174px; top: 11px; width: 174px; height: 72px; border-radius: 22px; background: rgba(215, 45, 39, .82); color: #fff; font: 500 44px/76px Roboto, sans-serif; text-align: center; z-index: 3; }
.mute { width: 72px; height: 72px; border-radius: 50%; background: #80868b; display: flex; align-items: center; justify-content: center; }
.mute.top { position: absolute; right: 113px; top: 22px; }
.tile { position: absolute; right: 135px; top: 193px; width: 430px; height: 242px; border-radius: 20px; background: #5f6368; display: flex; align-items: center; justify-content: center; }
.tile .mute { position: absolute; right: 22px; top: 22px; }
.presenting { position: absolute; left: 163px; bottom: 38px; font: 500 37px/50px Inter, sans-serif; color: #fff; text-shadow: 0 1px 5px rgba(0, 0, 0, .7); white-space: nowrap; }
.fab { position: absolute; right: 113px; bottom: 22px; width: 88px; height: 88px; border-radius: 50%; background: #fff; box-shadow: 0 1px 6px rgba(0, 0, 0, .6); display: flex; align-items: center; justify-content: center; }
```
